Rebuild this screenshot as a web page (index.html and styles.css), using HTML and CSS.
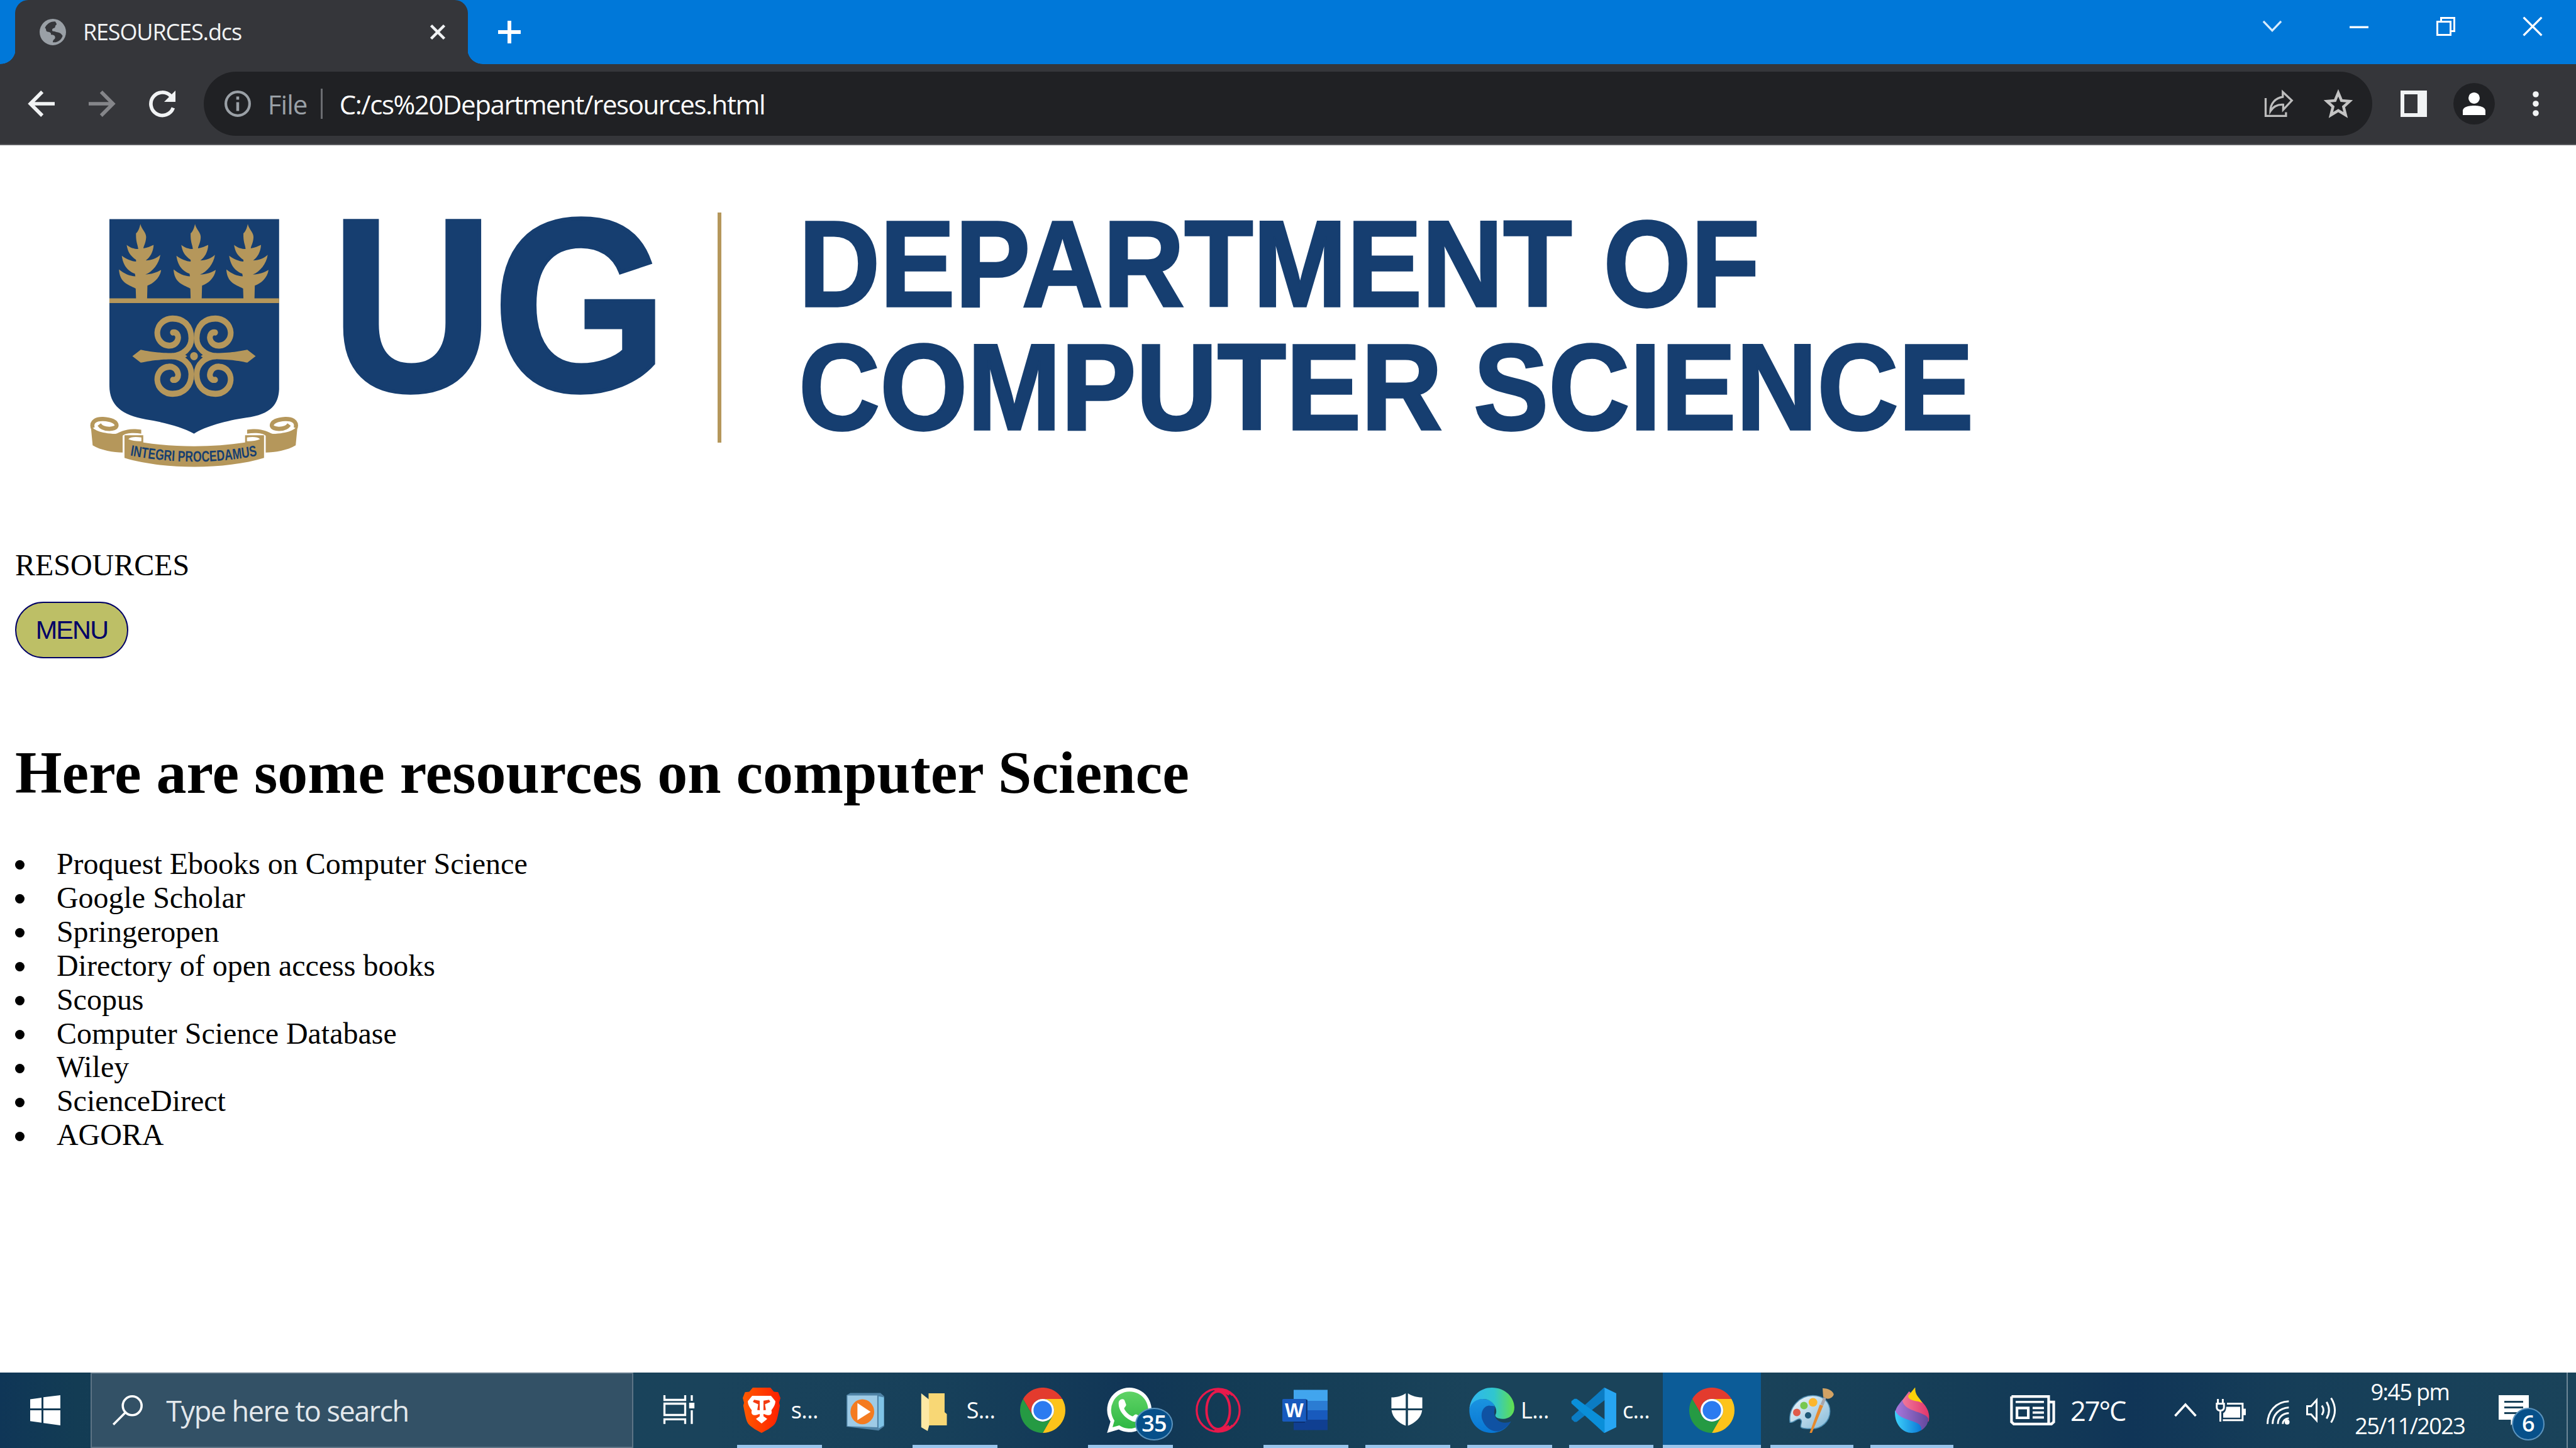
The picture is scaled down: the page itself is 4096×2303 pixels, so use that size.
FILE: index.html
```html
<!DOCTYPE html>
<html lang="en">
<head>
<meta charset="utf-8">
<title>RESOURCES.dcs</title>
<link rel="stylesheet" href="styles.css">
</head>
<body>
<svg class="defs" aria-hidden="true">
  <defs>
    <symbol id="chrome" viewBox="0 0 24 24">
      <path fill="#e33b2e" d="M1.6 6A12 12 0 0 1 22.4 6H12A6 6 0 0 0 6.8 15Z"/>
      <path fill="#fdc31a" d="M22.4 6A12 12 0 0 1 12 24L17.2 15A6 6 0 0 0 12 6Z"/>
      <path fill="#259a43" d="M1.6 6L6.8 15A6 6 0 0 0 17.2 15L12 24A12 12 0 0 1 1.6 6Z"/>
      <circle cx="12" cy="12" r="6" fill="#fff"/><circle cx="12" cy="12" r="4.9" fill="#2c7bf0"/>
    </symbol>
    <path id="tree" d="M388 128C395 160 425 175 422 205C420 235 408 250 406 264C430 262 450 252 467 245C465 285 445 315 420 332C455 330 485 320 507 300C500 350 460 395 418 410C455 408 485 400 512 384C505 430 465 460 430 472L428 545H362L360 488C310 465 265 455 260 382C290 405 325 420 358 420L355 405C300 385 283 345 277 305C305 325 335 335 362 338V328C325 305 312 280 306 245C325 260 350 268 375 268C372 240 360 230 362 180C375 170 383 150 388 128Z"/>
    <path id="scroll" d="M582 733C606 730 617 750 612 770C605 800 575 808 555 806C515 803 487 770 489 732C492 685 535 655 580 655C650 655 692 700 692 765C692 820 640 862 580 865"/>
    <g id="ribbon">
      <path d="M91 1245C100 1275 150 1295 240 1298C270 1290 300 1262 393 1275V1297C350 1290 300 1292 282 1308V1402C230 1402 150 1390 103 1362Z"/>
      <path fill="none" stroke="#b5975b" stroke-width="24" d="M103 1265C92 1225 130 1214 165 1215C215 1217 246 1232 246 1252C243 1276 165 1278 142 1246"/>
    </g>
    <linearGradient id="brave"><stop offset="0" stop-color="#ff5a00"/><stop offset="1" stop-color="#ff1f00"/></linearGradient>
    <linearGradient id="edgeA"><stop offset="0" stop-color="#2fb5f0"/><stop offset=".55" stop-color="#30c6cf"/><stop offset="1" stop-color="#62e04c"/></linearGradient>
    <linearGradient id="edgeB" x2="0" y2="1"><stop offset="0" stop-color="#1a93e0"/><stop offset="1" stop-color="#0877d4"/></linearGradient>
    <linearGradient id="wa" x2="0" y2="1"><stop offset="0" stop-color="#5fd366"/><stop offset="1" stop-color="#2fb843"/></linearGradient>
    <linearGradient id="pal" x2="1" y2="1"><stop offset="0" stop-color="#f2f8fc"/><stop offset="1" stop-color="#83b9d8"/></linearGradient>
    <linearGradient id="dropA"><stop offset="0" stop-color="#f07fa0"/><stop offset="1" stop-color="#e2366b"/></linearGradient>
    <linearGradient id="dropB"><stop offset="0" stop-color="#a877dc"/><stop offset="1" stop-color="#62489c"/></linearGradient>
    <linearGradient id="dropC"><stop offset="0" stop-color="#3fd2fb"/><stop offset="1" stop-color="#0a78d6"/></linearGradient>
  </defs>
</svg>

<header class="titlebar">
  <div class="tab">
    <svg class="favicon" viewBox="0 0 14 14"><circle cx="7" cy="7" r="7" fill="#9aa0a6"/><path fill="#35363a" d="M8.3 1.4C5.6 1.2 3.6 2.9 2.8 4.8C3.8 5.2 3 6.6 4.2 6.8C5.6 7 6.2 7.3 6 8.4C7.6 8.4 8.4 9 8.2 10.2C8 11 7 11 7 12.4C9.6 12.8 11.6 11 12.2 9C11.4 8 11 7.4 9.8 7.2C8.4 7 8.4 6.6 7.2 6.6C6.4 6.4 6.4 5 7.8 4.8C8.6 4.6 8 3.6 8.8 3.2C9.4 2.8 8.6 2 8.3 1.4Z"/></svg>
    <span class="tab-title">RESOURCES.dcs</span>
    <svg class="tab-close" viewBox="0 0 8 8"><path d="M.5 .5L7.5 7.5M7.5 .5L.5 7.5" stroke="#f1f3f4" stroke-width="1.5"/></svg>
  </div>
  <svg class="new-tab" viewBox="0 0 12 12"><path d="M6 0V12M0 6H12" stroke="#fff" stroke-width="2"/></svg>
  <div class="win-controls">
    <svg viewBox="0 0 10 10"><path d="M.3 2.3L5 7.2L9.7 2.3" fill="none" stroke="#d8ecfc" stroke-width="1.1"/></svg>
    <svg viewBox="0 0 10 10"><path d="M0 5.4H10" stroke="#fff" stroke-width="1.1"/></svg>
    <svg viewBox="0 0 10 10"><path d="M.5 2.5H7.5V9.5H.5ZM2.5 2.5V.5H9.5V7.5H7.5" fill="none" stroke="#fff"/></svg>
    <svg viewBox="0 0 10 10"><path d="M.2 .2L9.8 9.8M9.8 .2L.2 9.8" stroke="#fff" stroke-width="1.1"/></svg>
  </div>
</header>

<nav class="toolbar">
  <svg class="tool" viewBox="0 0 14 14"><path d="M14 7H1.4M7.4 .7L1.1 7L7.4 13.3" fill="none" stroke="#f1f3f4" stroke-width="1.9"/></svg>
  <svg class="tool" viewBox="0 0 14 14"><path d="M0 7H12.6M6.6 .7L12.9 7L6.6 13.3" fill="none" stroke="#85868a" stroke-width="1.9"/></svg>
  <svg class="tool" viewBox="0 0 14 14"><path d="M12.8 9.2A6.1 6.1 0 1 1 11.6 3" fill="none" stroke="#f1f3f4" stroke-width="1.9"/><path d="M14 0V6H8Z" fill="#f1f3f4"/></svg>
  <div class="omnibox">
    <svg class="info" viewBox="0 0 14 14"><circle cx="7" cy="7" r="6.3" fill="none" stroke="#9aa0a6" stroke-width="1.4"/><path d="M7 6.2V10.8M7 3.2V4.8" stroke="#9aa0a6" stroke-width="1.5"/></svg>
    <span class="scheme">File</span>
    <span class="divider"></span>
    <span class="url">C:/cs%20Department/resources.html</span>
    <svg class="share" viewBox="0 0 15 14"><path d="M.5 4V13.5H11.3V11.5M3 11C3 7 5.5 4 9.6 3.4V.8L14.4 5.3L9.8 10.2V7.5C6.8 7.3 4.6 8.4 3 11Z" fill="none" stroke="#bdbdbd" stroke-width="1.1"/></svg>
    <svg class="star" viewBox="0 0 14 14"><path d="M7 1.2L8.7 5.3L13 5.7L9.8 8.6L10.9 13L7 10.6L3.1 13L4.2 8.6L1 5.7L5.3 5.3Z" fill="none" stroke="#c4c4c4" stroke-width="1.5"/></svg>
  </div>
  <svg class="panel" viewBox="0 0 14 14"><path fill="#f1f3f4" fill-rule="evenodd" d="M0 0H14V14H0ZM2 2V12H9V2Z"/></svg>
  <svg class="avatar" viewBox="0 0 22 22"><circle cx="11" cy="11" r="11" fill="#202124"/><circle cx="11" cy="8" r="3" fill="#fff"/><path fill="#fff" d="M5 17V14.8C5 12.4 9 12 11 12S17 12.4 17 14.8V17Z"/></svg>
  <svg class="dots" viewBox="0 0 4 14"><g fill="#f1f3f4"><circle cx="2" cy="2" r="1.6"/><circle cx="2" cy="7" r="1.6"/><circle cx="2" cy="12" r="1.6"/></g></svg>
</nav>

<main class="page">
  <svg class="banner" viewBox="0 231 4096 640">
    <g transform="translate(119.9 319.6) scale(.26636 .2854)">
      <path fill="#163e70" d="M203 101H1216V1050C1212 1130 1170 1190 1020 1208C900 1225 780 1255 708 1297C640 1260 520 1232 420 1217C280 1195 203 1140 203 1030Z"/>
      <g fill="#b5975b">
        <path d="M203 543H1216V569H203Z"/>
        <use href="#tree"/><use href="#tree" x="326"/><use href="#tree" x="641"/>
        <path d="M340 865L390 829C450 840 500 849 640 848L668 865L640 882C500 881 450 890 390 901ZM1076 865L1026 829C966 840 916 849 776 848L748 865L776 882C916 881 966 890 1026 901Z"/>
        <circle cx="708" cy="865" r="23"/>
      </g>
      <g fill="none" stroke="#b5975b" stroke-width="34" stroke-linecap="round">
        <use href="#scroll"/>
        <use href="#scroll" transform="translate(1416 0) scale(-1 1)"/>
        <use href="#scroll" transform="translate(0 1730) scale(1 -1)"/>
        <use href="#scroll" transform="translate(1416 1730) scale(-1 -1)"/>
      </g>
      <g fill="#b5975b">
        <use href="#ribbon"/>
        <use href="#ribbon" transform="translate(1418 0) scale(-1 1)"/>
        <path fill-rule="evenodd" d="M293 1306H405V1346C600 1374 820 1374 1013 1346V1306H1126V1432C900 1498 520 1498 293 1432ZM316 1328C340 1338 370 1340 394 1339V1318C360 1314 330 1314 316 1328ZM1102 1328C1078 1338 1048 1340 1024 1339V1318C1058 1314 1088 1314 1102 1328Z"/>
      </g>
      <path id="motto" fill="none" d="M326 1418Q708 1488 1094 1418"/>
      <text class="motto"><textPath href="#motto" textLength="764" lengthAdjust="spacingAndGlyphs">INTEGRI PROCEDAMUS</textPath></text>
    </g>
    <text class="logo-big" x="527" y="621" textLength="534" lengthAdjust="spacingAndGlyphs">UG</text>
    <path fill="#b5975b" d="M1141 338H1147V704H1141Z"/>
    <text class="logo-name" x="1270" y="486.5" textLength="1528" lengthAdjust="spacingAndGlyphs">DEPARTMENT OF</text>
    <text class="logo-name" x="1270" y="682.5" textLength="1868" lengthAdjust="spacingAndGlyphs">COMPUTER SCIENCE</text>
  </svg>
  <p class="crumb">RESOURCES</p>
  <button class="menu">MENU</button>
  <h1>Here are some resources on computer Science</h1>
  <ul class="links">
    <li>Proquest Ebooks on Computer Science</li>
    <li>Google Scholar</li>
    <li>Springeropen</li>
    <li>Directory of open access books</li>
    <li>Scopus</li>
    <li>Computer Science Database</li>
    <li>Wiley</li>
    <li>ScienceDirect</li>
    <li>AGORA</li>
  </ul>
</main>

<footer class="taskbar">
  <div class="start"><svg viewBox="0 0 16 16"><path fill="#fff" d="M0 2.2L6 1.3V7H0ZM7 1.1L16 0V7H7ZM0 8H6V14.6L0 13.8ZM7 8H16V16L7 14.8Z"/></svg></div>
  <div class="search">
    <svg viewBox="0 0 16 16"><circle cx="10.4" cy="5.6" r="5" fill="none" stroke="#fff" stroke-width="1.2"/><path d="M6.9 9.1L.4 15.6" stroke="#fff" stroke-width="1.2"/></svg>
    <span>Type here to search</span>
  </div>
  <div class="taskview"><svg viewBox="0 0 16 16"><path d="M.5 0V2.5H11.5V0M.5 4.5H11.5V10.5H.5ZM.5 15.3V12.8H11.5V15.3M15 0V3M15 8V15.3" fill="none" stroke="#fff" stroke-width="1.1"/><path fill="#fff" d="M13.6 4H16.4V7H13.6Z"/></svg></div>

  <div class="task run first"><svg viewBox="0 0 24 24"><path fill="url(#brave)" d="M7.3 0H16.7L18.5 2.2L20.8 2.4L22 5.5L21.3 8L21.7 9.5C20.8 14 20.3 17.5 19 19.3C17 21.5 14 23 12 24C10 23 7 21.5 5 19.3C3.7 17.5 3.2 14 2.3 9.5L2.7 8L2 5.5L3.2 2.4L5.5 2.2Z"/><path fill="#fff" d="M7 4.3H17L19.3 7.2C19.3 9 18.4 10.5 17.2 12C17.8 14 16.6 15 14.7 14.5L13 13.9V15.2L15 16.6L12 19L9 16.6L11 15.2V13.9L9.3 14.5C7.4 15 6.2 14 6.8 12C5.6 10.5 4.7 9 4.7 7.2Z"/><path fill="#f33a10" d="M8 6.4L11 6.9V12L9.7 11.8L10.2 8.8L7.4 7.6ZM16 6.4L13 6.9V12L14.3 11.8L13.8 8.8L16.6 7.6Z"/></svg><span>s...</span></div>
  <div class="task media"><svg viewBox="0 0 20 24"><path fill="#4f83a6" d="M0 4L2 2.8H18L20 4.6V20.5L17 22.8L0 20.7Z"/><path fill="#9ecbe6" d="M.5 4.2H16.3V21L.5 20.4Z"/><path fill="#7fc3e6" d="M17 4.6L19.8 5.2V20L17 21.6Z"/><ellipse cx="8.4" cy="12.8" rx="6.3" ry="6.6" fill="#f47b20"/><path fill="#fff" d="M5.8 8.2L12.8 12.8L5.8 17.3Z"/></svg></div>
  <div class="task run folder"><svg viewBox="0 0 24 24"><path fill="#f8d775" d="M3.6 3H16V13L17.2 14V20H7.5V3Z"/><path fill="#fde9a4" d="M3.6 3L7.8 6.3V20L7 23L3.6 21Z"/></svg><span>S...</span></div>
  <div class="task plain"><svg viewBox="0 0 24 24"><use href="#chrome"/></svg></div>
  <div class="task run solo wa"><svg viewBox="0 0 24 24"><path fill="#fff" d="M12 0A11.8 11.8 0 1 1 6.3 22.2L.1 24L1.9 18A11.8 11.8 0 0 1 12 0Z"/><path fill="url(#wa)" d="M12 2.1A9.8 9.8 0 1 1 6.6 20L3 21L4 17.5A9.8 9.8 0 0 1 12 2.1Z"/><path fill="#fff" d="M6.3 7.5C6.8 6 9 5.6 9.4 6.8L10.2 9C10.4 9.8 9 10.6 9.2 11.2C10.2 13.2 11.6 14.4 13.4 15.2C14 15.4 14.8 13.8 15.6 14.2L17.8 15.3C18.6 15.8 17.8 17.6 16.6 18C13 19.2 5.4 13.4 6.3 7.5Z"/></svg><b class="badge">35</b></div>
  <div class="task plain"><svg viewBox="0 0 24 24"><g fill="none" stroke="#e8194b"><ellipse cx="12" cy="12" rx="11.4" ry="11.4" stroke-width="1.1"/><ellipse cx="12" cy="12" rx="6.2" ry="10" stroke-width="1.3"/><path d="M10 1.2C15 1 19 3 19.6 4.2M10 22.8C15 23 19 21 19.6 19.8" stroke-width="1"/><path d="M11 1.5Q14 .8 18 3.4M11 22.5Q14 23.2 18 20.6" stroke-width="2"/></g></svg></div>
  <div class="task run solo gap12"><svg viewBox="0 0 24 24"><path fill="#41a5ee" d="M6 1.2H24V7H6Z"/><path fill="#2b7cd3" d="M6 7H24V12H6Z"/><path fill="#185abd" d="M6 12H24V17H6Z"/><path fill="#103f91" d="M6 17H24V22.5H6Z"/><path fill="#0b2f6d" d="M6 17H13.3V6.5L12 6V18.6H6Z"/><rect y="6" width="12.6" height="12" rx=".6" fill="#185abd"/><text class="word-w" x="6.3" y="15.8">W</text></svg></div>
  <div class="task run solo gap9"><svg viewBox="0 0 24 24"><path fill="#fff" d="M3.8 5.2C7 5.2 9.5 4.3 11.4 3V11H3.8ZM12.6 3C14.5 4.3 17 5.2 20.2 5.2V11H12.6ZM3.9 12H11.4V20.2C7.5 18.6 4.4 16 3.9 12ZM12.6 12H20.1C19.6 16 16.5 18.6 12.6 20.2Z"/></svg></div>
  <div class="task run gap9"><svg viewBox="0 0 24 24"><path fill="url(#edgeB)" d="M.2 10.5C1 7 4 6 7 6C11 6 13 8 13.6 10C9 9 7 13 10 17C13 21 18 21 22 18C20 22 16 24 12 24C4 24 -.6 17 .2 10.5Z"/><path fill="#0f52a3" d="M10.5 9.5C7 10 6 14 7 17C8.5 21.5 13 24 16 23C19 22 21 20 22.2 18C18 19.5 14 18 13.4 14C13 12 14 11 13.6 10Z"/><path fill="url(#edgeA)" d="M.2 11C.8 4.5 6 0 12 0C19.5 0 24 5.5 24 10.5C24 14.5 21 16.6 18 16.6C15 16.6 13.4 15.5 14 14.3C15.5 12 13 6 7.5 6C4 6 1 8 .2 11Z"/></svg><span>L...</span></div>
  <div class="task run gap9"><svg viewBox="0 0 24 24"><path fill="#0b7cc4" d="M17.5 0L.3 15.5V16.8L1.8 18.2H3L18 6.5V0Z"/><path fill="#0a8fd9" d="M17.5 24L.2 8.3V7.2L1.8 5.9H3L18 17V24Z"/><path fill="#27a5f2" d="M17.8 0L24 3V21L17.8 24Z"/></svg><span>c...</span></div>
  <div class="task active"><svg viewBox="0 0 24 24"><use href="#chrome"/></svg></div>
  <div class="task run paint"><svg viewBox="0 0 24 24"><path fill="url(#pal)" stroke="#4d8db2" stroke-width=".5" d="M.4 18.4C-.6 10 6 4.2 12.5 4.2C18.5 4.2 21.6 8 21.6 12.5C21.6 18 17 21.8 12 21.8C9 21.8 6 21.6 6.1 20.6C6 19 7.4 17.6 5.6 16.6C4 16.2 2.6 18.8 .4 18.4Z"/><circle cx="10" cy="14.7" r="1.7" fill="#1f5878"/><circle cx="4" cy="13.2" r="2" fill="#e05a4a"/><circle cx="7.8" cy="9.5" r="2" fill="#78c850"/><circle cx="12.6" cy="7.8" r="2.3" fill="#fcb62c"/><path fill="#e58a2e" d="M16.2 9L18 9.6L12 24H10.8Z"/><path fill="#a7a7ab" d="M16.6 8.8L18.2 5L19.6 5.6L18.1 9.5Z"/><path fill="#d2a264" d="M17.7 .3C20.5 .2 23.4 1.8 23.6 3.6C23.2 5.4 20.8 6.3 19.6 5.7L18 4.8Z"/></svg></div>
  <div class="task run paint3d"><svg viewBox="0 0 24 24"><path fill="url(#dropA)" d="M10.5 2L5.5 8.6L8 14L20.9 18C21.7 14 20.5 11 17.5 7.7Z"/><path fill="url(#dropB)" d="M7 6.5C4.5 9.5 3.5 11 3.2 13L8 19L17 22.6C19.5 21 20.6 19 20.8 16.5C19.5 12.5 7.5 13 7 6.5Z"/><path fill="url(#dropC)" d="M3.1 12C2.4 19 7 24 12 24C14 24 15.6 23.5 17 22.6C18 16.5 5.5 18.5 3.1 12Z"/><path fill="#fcd209" d="M13.6 0L10 4.4C10.4 7.4 15 6.6 17.6 8.2C15.8 5 13.6 4 13.8 0Z"/></svg></div>

  <div class="weather"><svg viewBox="0 0 24 16"><path d="M.8 .7H20.5V14.8M20.5 3.6H23.2V14.2L22 15.3H2L.8 14.2V.7" fill="none" stroke="#fff" stroke-width="1.4"/><path d="M3 3.6H18M12 6.8H18M12 9.2H18M12 11.8H18" stroke="#fff" stroke-width="1.2"/><path d="M3.7 6.8H9.7V12H3.7Z" fill="none" stroke="#fff" stroke-width="1.4"/></svg><span>27°C</span></div>
  <div class="tray">
    <svg class="up" viewBox="0 0 12 8"><path d="M.5 7L6 1L11.5 7" fill="none" stroke="#fff" stroke-width="1.2"/></svg>
    <svg class="battery" viewBox="0 0 16 12"><path fill="none" stroke="#fff" d="M6 2.5H14.3V11.3H3.8M1.2 0V2.2M3.8 0V2.2M.6 2.5H4.4V4.5Q4.4 6 2.5 6.2Q.6 6 .6 4.5ZM2.5 6V12"/><path fill="#fff" d="M5.6 4.2H13V9.9H4V7.6Q5.6 6.8 5.6 4.2ZM14.6 5.2H16V8.6H14.6Z"/></svg>
    <svg class="wifi" viewBox="0 0 12 13"><path fill="none" stroke="#fff" stroke-width="1" d="M.5 12.6C.5 6 5 .8 11.8 .6M3.2 12.6C3.2 8 6.4 4.2 11.8 3.8M6 12.6C6 9.6 8 7 11.8 6.8M8.6 12.6C8.6 11 9.8 9.8 11.8 9.6"/><circle cx="10.9" cy="11.6" r="1.3" fill="#fff"/></svg>
    <svg class="sound" viewBox="0 0 16 14"><path fill="none" stroke="#fff" stroke-width="1" d="M.5 4.8H2.6L5.5 1.6V12.4L2.6 9.2H.5ZM8.3 4.5Q10 7 8.3 9.5M10.8 2.6Q13.4 7 10.8 11.4M13.2 .5Q17.2 7 13.2 13.5"/></svg>
  </div>
  <div class="clock"><span class="time">9:45 pm</span><span class="date">25/11/2023</span></div>
  <div class="notif"><svg viewBox="0 0 16 16"><path fill="#fff" fill-rule="evenodd" d="M0 0H16V13H9L6.5 16V13H0ZM3 3V4H13V3ZM3 6V7H13V6ZM3 9V10H10V9Z"/></svg><b class="badge">6</b></div>
  <div class="desktop-edge"></div>
</footer>
</body>
</html>
```
FILE: styles.css
```css
/* 0.1rem is one logical screen pixel */
html { font-size: 29.985px; }
* { box-sizing: border-box; }
body {
  margin: 0;
  width: 100vw;
  height: 100vh;
  overflow: hidden;
  display: flex;
  flex-direction: column;
  background: #fff;
  font-family: "Open Sans", "Noto Sans", sans-serif;
}
svg { display: block; flex: none; overflow: visible; }
.defs { width: 0; height: 0; position: absolute; }

/* title bar */
.titlebar {
  flex: none;
  height: 3.4rem;
  display: flex;
  align-items: center;
  background: #0078d9;
}
.tab {
  position: relative;
  width: 24rem;
  height: 3.4rem;
  margin-left: .8rem;
  padding: 0 1.2rem 0 1.3rem;
  display: flex;
  align-items: center;
  background: #35363a;
  border-radius: .7rem .7rem 0 0;
  color: #f1f3f4;
}
.tab::before, .tab::after {
  content: "";
  position: absolute;
  bottom: 0;
  width: .8rem;
  height: .8rem;
}
.tab::before { left: -.78rem; background: radial-gradient(circle at 0 0, transparent .78rem, #35363a .8rem); }
.tab::after { right: -.78rem; background: radial-gradient(circle at 100% 0, transparent .78rem, #35363a .8rem); }
.favicon { width: 1.4rem; height: 1.4rem; }
.tab-title { margin-left: .9rem; font-size: 1.2rem; line-height: 1.6rem; white-space: nowrap; letter-spacing: -.037rem; }
.tab-close { width: .8rem; height: .8rem; margin-left: auto; }
.new-tab { width: 1.2rem; height: 1.2rem; margin-left: 1.6rem; }
.win-controls { display: flex; gap: 3.6rem; margin: 0 1.8rem .6rem auto; }
.win-controls svg { width: 1rem; height: 1rem; }

/* toolbar */
.toolbar {
  flex: none;
  height: 4.3rem;
  padding: 0 1.95rem 0 1.5rem;
  display: flex;
  align-items: center;
  background: #35363a;
  border-bottom: .1rem solid #5c5d61;
}
.tool { width: 1.4rem; height: 1.4rem; margin-right: 1.8rem; }
.omnibox {
  flex: 1;
  height: 3.4rem;
  margin-left: -.3rem;
  padding: 0 1.1rem;
  display: flex;
  align-items: center;
  background: #202124;
  border-radius: 1.7rem;
  font-size: 1.4rem;
  color: #fff;
  white-space: nowrap;
}
.info { width: 1.4rem; height: 1.4rem; }
.scheme { width: 2.8rem; margin-left: .9rem; color: #9aa0a6; letter-spacing: -.03rem; }
.divider { width: .1rem; height: 1.6rem; margin-right: .9rem; background: #6b6d71; }
.url { letter-spacing: -.047rem; }
.share { width: 1.5rem; height: 1.4rem; margin-left: auto; }
.star { width: 1.4rem; height: 1.4rem; margin-left: 1.7rem; }
.panel { width: 1.4rem; height: 1.4rem; margin-left: 1.5rem; }
.avatar { width: 2.2rem; height: 2.2rem; margin-left: 1.4rem; }
.dots { width: .4rem; height: 1.4rem; margin-left: 1.95rem; }

/* web page */
.page {
  flex: 1;
  min-height: 0;
  display: flex;
  flex-direction: column;
  align-items: flex-start;
  font-family: "Liberation Serif", "Times New Roman", serif;
  color: #000;
}
.banner { width: 4096px; height: 640px; }
.banner text { font-family: "Liberation Sans", Arial, sans-serif; font-weight: 700; fill: #163e70; stroke: #163e70; }
.banner .logo-big { font-size: 392px; stroke-width: 6px; }
.banner .logo-name { font-size: 195px; stroke-width: 3.5px; }
.banner .motto { font-size: 84px; stroke: none; }
.crumb { margin: .03rem 0 0 .8rem; font-size: 1.6rem; line-height: 1.8rem; }
.menu {
  width: 6rem;
  height: 3rem;
  margin: 1.05rem 0 0 .8rem;
  padding: .05rem 0 0;
  border: .1rem solid #000066;
  border-radius: 1.5rem;
  background: #bdbf66;
  color: #000066;
  font: 1.38rem "Liberation Sans", Arial, sans-serif;
  letter-spacing: -.06rem;
}
h1 { margin: 4.22rem 0 2.07rem .8rem; font-size: 3.2rem; line-height: 3.7rem; white-space: nowrap; }
.links { margin: 0 0 0 .8rem; padding: 0; list-style: none; font-size: 1.6rem; line-height: 1.8rem; }
.links li { display: flex; align-items: center; }
.links li::before { content: ""; width: .5rem; height: .5rem; margin: .15rem 1.7rem 0 0; border-radius: 50%; background: #000; }

/* taskbar */
.taskbar {
  flex: none;
  height: 4rem;
  display: flex;
  align-items: stretch;
  color: #fff;
  background: linear-gradient(90deg, #0f3657 0, #133c54 4rem, #19435b 30rem, #1a435b 38rem, #17405a 50rem, #113656 60rem, #133b55 65rem, #1a435a 78rem, #1a435a 92rem, #153d57 104rem, #103557 113rem, #163e58 122rem, #1a435a 136.6rem);
}
.taskbar span { white-space: nowrap; }
.start { width: 4.8rem; padding: 1.2rem 1.6rem; }
.start svg, .taskview svg { width: 1.6rem; height: 1.6rem; }
.search {
  width: 28.8rem;
  padding: 0 1.1rem;
  display: flex;
  align-items: center;
  gap: 1.25rem;
  background: #335166;
  border: .1rem solid #5d7486;
  font-size: 1.5rem;
  letter-spacing: -.05rem;
  color: #e3e8ec;
}
.search svg { width: 1.6rem; height: 1.6rem; }
.taskview { width: 4.8rem; padding: 1.2rem 1.6rem; }

.task { position: relative; flex: none; padding-top: .8rem; display: flex; }
.task svg { width: 2.4rem; height: 2.4rem; }
.task span { margin-left: .35rem; font-size: 1.2rem; line-height: 2.4rem; letter-spacing: -.02rem; }
.run { width: 4.5rem; padding-left: .1rem; border-bottom: .2rem solid #99c5ec; }
.solo { padding-left: 1rem; }
.first { margin-left: .7rem; }
.media { width: 2rem; margin-left: 1.3rem; }
.media svg { width: 2rem; }
.folder { margin-left: 1.5rem; }
.plain { width: 2.4rem; margin-left: 1.2rem; }
.wa, .gap12 { margin-left: 1.2rem; }
.gap9 { margin-left: .9rem; }
.active { width: 5.2rem; margin-left: .5rem; padding-left: 1.4rem; background: #0c5c98; border-bottom: .2rem solid #99c5ec; }
.paint { width: 4.4rem; margin-left: .5rem; padding-left: 1rem; }
.paint3d { width: 4.4rem; margin-left: .9rem; padding-left: 1rem; }
.word-w { font: 700 10.5px "Liberation Sans", Arial, sans-serif; fill: #fff; text-anchor: middle; }
.badge {
  position: absolute;
  width: 1.9rem;
  height: 1.75rem;
  border: .1rem solid #5b93bd;
  border-radius: 50%;
  background: #07508a;
  font-size: 1.2rem;
  font-weight: 600;
  line-height: 1.5rem;
  letter-spacing: -.03rem;
  text-align: center;
}
.wa .badge { left: 2.5rem; top: 1.85rem; width: 2rem; }

.weather { width: 6.1rem; margin-left: 3rem; display: flex; align-items: center; gap: .8rem; font-size: 1.45rem; letter-spacing: -.07rem; }
.weather svg { width: 2.4rem; height: 1.6rem; }
.tray { display: flex; align-items: center; margin-left: 2.6rem; }
.up { width: 1.2rem; height: .8rem; }
.battery { width: 1.6rem; height: 1.2rem; margin-left: 1rem; }
.wifi { width: 1.2rem; height: 1.3rem; margin: .2rem 0 0 1.1rem; }
.sound { width: 1.6rem; height: 1.4rem; margin-left: .9rem; }
.clock { width: 5.8rem; margin-left: 1rem; display: flex; flex-direction: column; align-items: center; padding-top: .13rem; font-size: 1.2rem; line-height: 1.8rem; letter-spacing: -.053rem; }
.notif { position: relative; width: 3.6rem; margin-left: 1.8rem; padding-top: 1.2rem; }
.notif svg { width: 1.6rem; height: 1.6rem; }
.notif .badge { left: .7rem; top: 1.85rem; width: 1.75rem; }
.desktop-edge { border-left: .1rem solid #6d8797; }
```
